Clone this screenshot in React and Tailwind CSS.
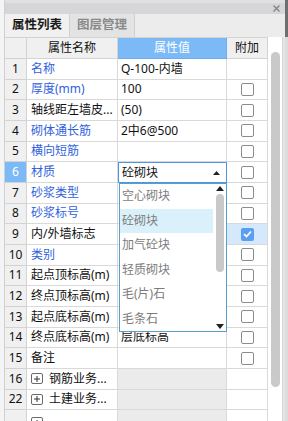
import React from "react";

const rows = [
  { n: "1", name: "名称", blue: true, val: "Q-100-内墙", cb: false },
  { n: "2", name: "厚度(mm)", blue: true, val: "100", cb: true },
  { n: "3", name: "轴线距左墙皮...", blue: false, val: "(50)", cb: true },
  { n: "4", name: "砌体通长筋", blue: true, val: "2中6@500", cb: true },
  { n: "5", name: "横向短筋", blue: true, val: "", cb: true },
  { n: "6", name: "材质", blue: true, val: "砼砌块", cb: true, sel: true },
  { n: "7", name: "砂浆类型", blue: true, val: "", cb: true },
  { n: "8", name: "砂浆标号", blue: true, val: "", cb: true },
  { n: "9", name: "内/外墙标志", blue: false, val: "", cb: true, checked: true },
  { n: "10", name: "类别", blue: true, val: "", cb: true },
  { n: "11", name: "起点顶标高(m)", blue: false, val: "", cb: true },
  { n: "12", name: "终点顶标高(m)", blue: false, val: "", cb: true },
  { n: "13", name: "起点底标高(m)", blue: false, val: "", cb: true },
  { n: "14", name: "终点底标高(m)", blue: false, val: "层底标高", cb: true },
  { n: "15", name: "备注", blue: false, val: "", cb: true },
  { n: "16", name: "钢筋业务...", blue: false, val: "", cb: false, group: true },
  { n: "22", name: "土建业务...", blue: false, val: "", cb: false, group: true },
  { n: "", name: "", blue: false, val: "", cb: false, group: true, partial: true },
];

const items = ["空心砌块", "砼砌块", "加气砼块", "轻质砌块", "毛(片)石", "毛条石"];

function Checkbox({ checked }) {
  if (checked) {
    return (
      <div className="w-[13px] h-[13px] rounded-[2px] bg-[#5b9ff0] flex items-center justify-center">
        <svg width="9" height="8" viewBox="0 0 9 8">
          <path d="M1 4.2 L3.5 6.5 L8 1.5" fill="none" stroke="#fff" strokeWidth="1.8" />
        </svg>
      </div>
    );
  }
  return <div className="w-[13px] h-[13px] rounded-[2px] border border-[#8c8c8c] bg-white" />;
}

function PlusBox() {
  return (
    <div className="w-[12px] h-[11px] border border-[#6a6a6a] rounded-[2px] flex items-center justify-center shrink-0">
      <svg width="6" height="6" viewBox="0 0 6 6">
        <path d="M3 0 V6 M0 3 H6" stroke="#333" strokeWidth="1" />
      </svg>
    </div>
  );
}

export default function App() {
  return (
    <div
      className="w-[288px] h-[421px] overflow-hidden bg-[#f4f4f4] flex text-[12px] text-[#111]"
      style={{ fontFamily: '"Noto Sans", "Noto Sans CJK SC", sans-serif' }}
    >
      <div className="w-[5px] shrink-0 bg-[#f4f4f4] border-r border-[#d0d0d0]" />
      <div className="flex flex-col w-[280px] shrink-0 min-h-0">
        {/* title bar */}
        <div className="h-[14px] shrink-0 bg-[#d6d6d8] border-t-[3px] border-[#e0e0e2] flex items-center justify-end pr-[5px]">
          <svg width="7" height="7" viewBox="0 0 7 7">
            <path d="M0.5 0.5 L6.5 6.5 M6.5 0.5 L0.5 6.5" stroke="#808080" strokeWidth="1.2" />
          </svg>
        </div>
        {/* tabs */}
        <div className="h-[23px] shrink-0 bg-[#ececec] flex items-end">
          <div className="h-[23px] w-[65px] bg-[#f0f0f0] border-r border-[#d0d0d0] flex items-center justify-center font-bold text-[12.5px] text-[#1a1a1a] leading-none">
            属性列表
          </div>
          <div className="h-[23px] w-[65px] bg-[#e3e3e3] border-r border-[#d0d0d0] flex items-center justify-center font-bold text-[12.5px] text-[#8a8a8a] leading-none">
            图层管理
          </div>
        </div>
        {/* body */}
        <div className="flex flex-1 min-h-0 overflow-hidden">
          <div className="relative w-[263px] shrink-0 bg-white">
            {/* header */}
            <div className="flex h-[22px] border-t border-[#d3d3d3]">
              <div className="w-[22px] bg-[#f0f0f0] border-r border-b border-[#d3d3d3]" />
              <div className="w-[91px] bg-[#f0f0f0] border-r border-b border-[#d3d3d3] flex items-center justify-center leading-none">
                属性名称
              </div>
              <div className="w-[109px] bg-[#7cb9f7] border-r border-b border-[#6aaef0] flex items-center justify-center text-white leading-none">
                属性值
              </div>
              <div className="w-[41px] bg-[#f0f0f0] border-r border-b border-[#d3d3d3] flex items-center justify-center leading-none">
                附加
              </div>
            </div>
            {rows.map((r, idx) => (
              <div key={idx} className="flex h-[20.67px]">
                <div
                  className={
                    r.sel
                      ? "w-[22px] bg-[#7cb9f7] text-white border-r border-b border-[#d3d3d3] flex items-center justify-center leading-none"
                      : "w-[22px] bg-[#f0f0f0] border-r border-b border-[#d3d3d3] flex items-center justify-center leading-none"
                  }
                >
                  {r.n}
                </div>
                <div
                  className={
                    "w-[91px] border-r border-b border-[#d9d9d9] flex pl-[4px] leading-none whitespace-nowrap overflow-hidden " +
                    (r.partial ? "items-start pt-[7px]" : "items-center") +
                    (r.blue ? " text-[#2f62dc]" : " text-[#111]")
                  }
                >
                  {r.group ? (
                    <div className="flex items-center gap-[6px]">
                      <PlusBox />
                      {r.name && <span>{r.name}</span>}
                    </div>
                  ) : (
                    r.name
                  )}
                </div>
                {r.sel ? (
                  <div className="w-[109px] border border-[#4a96e4] flex items-center justify-between pl-[3px] pr-[6px] leading-none">
                    <span>{r.val}</span>
                    <svg width="7" height="4" viewBox="0 0 7 4">
                      <path d="M0 4 L3.5 0 L7 4 Z" fill="#222" />
                    </svg>
                  </div>
                ) : (
                  <div
                    className={
                      "w-[109px] border-r border-b border-[#d9d9d9] flex items-center pl-[3px] leading-none whitespace-nowrap " +
                      (r.group ? "bg-[#ebebeb]" : "bg-white")
                    }
                  >
                    {r.val}
                  </div>
                )}
                <div
                  className={
                    "w-[41px] border-r border-b border-[#d9d9d9] flex items-center justify-center " +
                    (r.checked ? "bg-[#d6e9fc]" : "bg-white")
                  }
                >
                  {r.cb && <Checkbox checked={r.checked} />}
                </div>
              </div>
            ))}
            {/* dropdown list */}
            <div className="absolute left-[114px] top-[146px] w-[108px] h-[149px] bg-white border border-[#5a9fca] flex">
              <div className="flex flex-col w-[93px]">
                {items.map((it, i) => (
                  <div
                    key={it}
                    className={
                      "h-[24.5px] flex items-center pl-[2px] text-[#7c7c7c] leading-none " +
                      (i === 1 ? "bg-[#daf1fb]" : "")
                    }
                  >
                    {it}
                  </div>
                ))}
              </div>
              <div className="flex-1 flex flex-col items-center pt-[2px] pb-[2px]">
                <svg width="8" height="5" viewBox="0 0 8 5">
                  <path d="M0 5 L4 0 L8 5 Z" fill="#222" />
                </svg>
                <div className="w-[8px] h-[78px] mt-[3px] rounded-full bg-[#c9c9c9]" />
                <div className="flex-1" />
                <svg width="8" height="5" viewBox="0 0 8 5">
                  <path d="M0 0 L4 5 L8 0 Z" fill="#222" />
                </svg>
              </div>
            </div>
          </div>
          {/* scrollbar */}
          <div className="w-[15px] shrink-0 bg-white border-r border-[#d5d5d5] flex justify-center pt-[15px]">
            <div className="w-[9px] h-[335px] shrink-0 rounded-full bg-[#c9c9c9]" />
          </div>
          <div className="flex-1 bg-[#e6e6e6]" />
        </div>
      </div>
      <div className="w-[3px] shrink-0 flex flex-col">
        <div className="h-[37px] bg-[#6e6e6e]" />
        <div className="flex-1 bg-[#dcdcdc]" />
      </div>
    </div>
  );
}
